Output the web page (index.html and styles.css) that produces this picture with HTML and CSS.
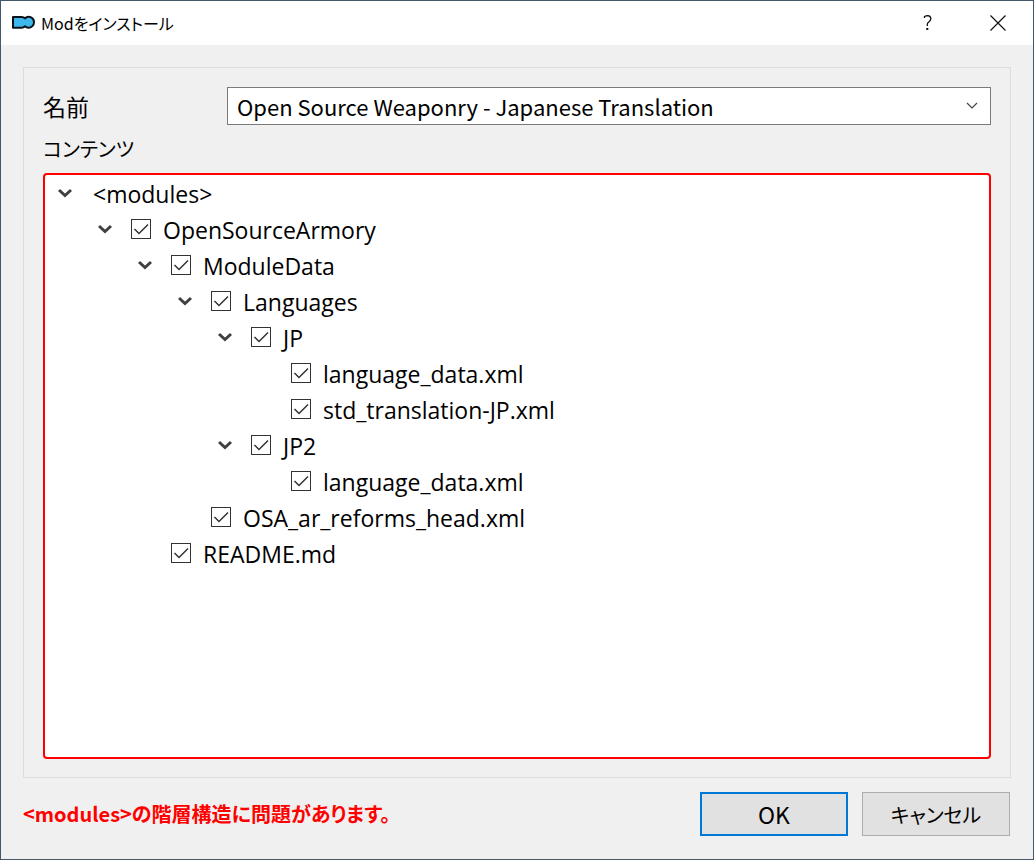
FILE: index.html
```
<!DOCTYPE html>
<html lang="ja">
<head>
    <meta charset="UTF-8">
    <meta name="viewport" content="width=device-width, initial-scale=1.0">
    <title>Modをインストール</title>
    <link rel="stylesheet" href="styles.css">
</head>
<body>
    <div class="window">
        <header class="titlebar">
            <svg class="app-icon" width="24" height="16" viewBox="0 0 24 16" aria-hidden="true">
                <path d="M2 2H10.500Q13 2 14 3.500Q15.500 1.700 17.500 1.700A5.500 5.500 0 0 1 17.500 12.700Q15.500 12.700 14 11.200Q12.500 12.700 10.500 12.700H2Z" fill="#3eb8ed" stroke="#0b1216" stroke-width="2" stroke-linejoin="round"/>
            </svg>
            <h1>Modをインストール</h1>
            <button class="title-button" type="button" aria-label="ヘルプ">
                <svg width="10" height="16" viewBox="0 0 10 16" fill="none" stroke="#111" stroke-width="1.300">
                    <path d="M1.500 3V1.500Q3 .7 4.700.7Q7.800.8 7.800 3.800Q7.800 5.200 6 6.700Q4.300 8 4.300 9.200V11"/>
                    <path d="M4.300 13V15" stroke-width="2"/>
                </svg>
            </button>
            <button class="title-button" type="button" aria-label="閉じる">
                <svg width="16" height="16" viewBox="0 0 16 16" stroke="#111" stroke-width="1.200">
                    <path d="M.5.5L15.500 15.500M15.500.5L.5 15.500"/>
                </svg>
            </button>
        </header>

        <form class="dialog">
            <div class="group">
                <div class="field">
                    <label for="modName">名前</label>
                    <select id="modName">
                        <option>Open Source Weaponry - Japanese Translation</option>
                    </select>
                </div>
                <h2 id="contentsLabel">コンテンツ</h2>
                <div class="tree" aria-labelledby="contentsLabel">
                    <ul>
                        <li>
                            <div class="row"><button class="toggle" type="button" aria-label="折りたたむ"></button><span>&lt;modules&gt;</span></div>
                            <ul>
                                <li>
                                    <div class="row"><button class="toggle" type="button" aria-label="折りたたむ"></button><label><input type="checkbox" checked>OpenSourceArmory</label></div>
                                    <ul>
                                        <li>
                                            <div class="row"><button class="toggle" type="button" aria-label="折りたたむ"></button><label><input type="checkbox" checked>ModuleData</label></div>
                                            <ul>
                                                <li>
                                                    <div class="row"><button class="toggle" type="button" aria-label="折りたたむ"></button><label><input type="checkbox" checked>Languages</label></div>
                                                    <ul>
                                                        <li>
                                                            <div class="row"><button class="toggle" type="button" aria-label="折りたたむ"></button><label><input type="checkbox" checked>JP</label></div>
                                                            <ul>
                                                                <li><div class="row leaf"><label><input type="checkbox" checked>language_data.xml</label></div></li>
                                                                <li><div class="row leaf"><label><input type="checkbox" checked>std_translation-JP.xml</label></div></li>
                                                            </ul>
                                                        </li>
                                                        <li>
                                                            <div class="row"><button class="toggle" type="button" aria-label="折りたたむ"></button><label><input type="checkbox" checked>JP2</label></div>
                                                            <ul>
                                                                <li><div class="row leaf"><label><input type="checkbox" checked>language_data.xml</label></div></li>
                                                            </ul>
                                                        </li>
                                                    </ul>
                                                </li>
                                                <li><div class="row leaf"><label><input type="checkbox" checked>OSA_ar_reforms_head.xml</label></div></li>
                                            </ul>
                                        </li>
                                        <li><div class="row leaf"><label><input type="checkbox" checked>README.md</label></div></li>
                                    </ul>
                                </li>
                            </ul>
                        </li>
                    </ul>
                </div>
            </div>

            <footer class="footer">
                <p class="error">&lt;modules&gt;の階層構造に問題があります。</p>
                <button class="button primary" type="button">OK</button>
                <button class="button" type="button">キャンセル</button>
            </footer>
        </form>
    </div>
    <script>
        document.querySelectorAll('.toggle').forEach(button => {
            button.addEventListener('click', () => {
                button.closest('li').classList.toggle('collapsed');
            });
        });
    </script>
</body>
</html>
```
FILE: styles.css
```
* {
    box-sizing: border-box;
}
body {
    margin: 0;
    font-family: 'Noto Sans CJK JP', sans-serif;
    font-feature-settings: 'palt';
    color: #000;
}
button, select {
    font-family: inherit;
    font-feature-settings: inherit;
    color: inherit;
}
.window {
    display: flex;
    flex-direction: column;
    min-height: 100vh;
    border: 1px solid #44566a;
    background-color: #f0f0f0;
}
.titlebar {
    display: flex;
    align-items: center;
    height: 44px;
    padding-left: 10px;
    background-color: #fff;
}
.titlebar h1 {
    flex: 1;
    margin: 0 0 0 6px;
    font-size: 16px;
    font-weight: 400;
    line-height: 24px;
}
.title-button {
    display: flex;
    align-items: center;
    justify-content: center;
    width: 70px;
    height: 44px;
    padding: 0;
    border: none;
    background: none;
}
.title-button:hover {
    background-color: #e5e5e5;
}
.dialog {
    flex: 1;
    display: flex;
    flex-direction: column;
    padding: 22px 22px 23px;
}
.group {
    flex: 1;
    display: flex;
    flex-direction: column;
    padding: 19px 19px 18px;
    border: 1px solid #dcdcdc;
}
.field {
    display: grid;
    grid-template-columns: 184px 1fr;
    align-items: center;
}
.field label, .group h2 {
    margin: 0;
    font-size: 23px;
    font-weight: 400;
    line-height: 36px;
}
.group h2 {
    padding: 6px 0;
    font-size: 20px;
}
.field select {
    appearance: none;
    width: 100%;
    height: 38px;
    padding: 0 40px 0 9px;
    border: 1px solid #7a7a7a;
    border-radius: 0;
    background: #fff url("data:image/svg+xml,%3Csvg xmlns='http://www.w3.org/2000/svg' width='12' height='8' fill='none' stroke='%23444' stroke-width='1.2'%3E%3Cpath d='M1 1L6 6L11 1'/%3E%3C/svg%3E") no-repeat right 12px center;
    font-size: 22px;
}
.tree {
    flex: 1;
    padding: 1px 0;
    border: 2px solid #f00;
    border-radius: 4px;
    background-color: #fff;
    font-family: 'Open Sans', sans-serif;
    font-size: 23px;
}
.tree ul {
    margin: 0;
    padding: 0;
    list-style: none;
}
.tree ul ul {
    padding-left: 40px;
}
.collapsed > ul {
    display: none;
}
.row {
    display: flex;
    align-items: center;
    gap: 6px;
    height: 36px;
}
.row span {
    padding-left: 2px;
}
.row label {
    display: flex;
    align-items: center;
    gap: 11px;
}
.leaf {
    padding-left: 46px;
}
.toggle {
    width: 40px;
    height: 20px;
    margin-bottom: 3px;
    padding: 0;
    border: none;
    background: url("data:image/svg+xml,%3Csvg xmlns='http://www.w3.org/2000/svg' width='14' height='10' fill='none' stroke='%23404040' stroke-width='3'%3E%3Cpath d='M1 2L7 7.500L13 2'/%3E%3C/svg%3E") no-repeat center;
}
.collapsed > .row .toggle {
    transform: rotate(-90deg);
}
.row input {
    appearance: none;
    width: 20px;
    height: 20px;
    margin: 0 1px 3px 0;
    border: 1px solid #333;
    background-color: #fff;
}
.row input:checked {
    background: #fff url("data:image/svg+xml,%3Csvg xmlns='http://www.w3.org/2000/svg' width='18' height='18' fill='none' stroke='%23333' stroke-width='1.500'%3E%3Cpath d='M2.500 9L7 13.500L16 4.500'/%3E%3C/svg%3E") no-repeat center;
}
.footer {
    display: flex;
    align-items: center;
    gap: 14px;
    padding: 14px 1px 0 0;
}
.error {
    flex: 1;
    margin: 0;
    color: #f00;
    font-size: 20px;
    font-weight: 700;
    line-height: 32px;
}
.button {
    width: 148px;
    height: 44px;
    padding: 0;
    border: 1px solid #adadad;
    background-color: #e1e1e1;
    font-size: 20px;
}
.button:hover {
    background-color: #e5f1fb;
}
.primary {
    border: 2px solid #0078d7;
    font-size: 23px;
}
```
